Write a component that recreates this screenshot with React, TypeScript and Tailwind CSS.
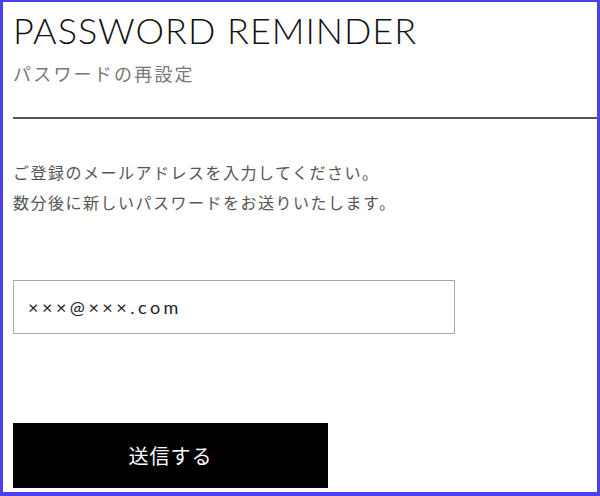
import React from 'react';

export default function App() {
  return (
    <div className="w-[600px] h-[496px] bg-white border-t-2 border-l-[3px] border-r-[3px] border-b-4 border-[#4b40ee] overflow-hidden">
      <div className="pl-[10px]">
        <h1 className="pt-[6px] text-[36px] leading-[44px] font-light text-[#111] tracking-[1px] font-['Lato','Noto_Sans',sans-serif]">
          PASSWORD REMINDER
        </h1>
        <p className="mt-[8px] text-[18px] leading-[26px] text-[#777] tracking-[2.2px] font-['Noto_Sans_CJK_JP',sans-serif]">
          パスワードの再設定
        </p>
        <div className="mt-[31px] h-[2px] bg-[#555]" />

        <div className="mt-[38px] text-[16px] leading-[30px] text-[#555] tracking-[1.5px] font-['Noto_Sans_CJK_JP',sans-serif]">
          <p>ご登録のメールアドレスを入力してください。</p>
          <p>数分後に新しいパスワードをお送りいたします。</p>
        </div>

        <form className="mt-[63px]" onSubmit={(e) => e.preventDefault()}>
          <input
            type="email"
            defaultValue="×××@×××.com"
            className="w-[442px] h-[54px] border border-[#aaa] px-[14px] text-[18px] text-[#222] tracking-[3.5px] font-['Lato','Noto_Sans',sans-serif] outline-none"
          />
          <div className="mt-[89px]">
            <button
              type="submit"
              className="w-[315px] h-[65px] bg-black text-white text-[20px] tracking-[1px] font-['Noto_Sans_CJK_JP',sans-serif]"
            >
              送信する
            </button>
          </div>
        </form>
      </div>
    </div>
  );
}
